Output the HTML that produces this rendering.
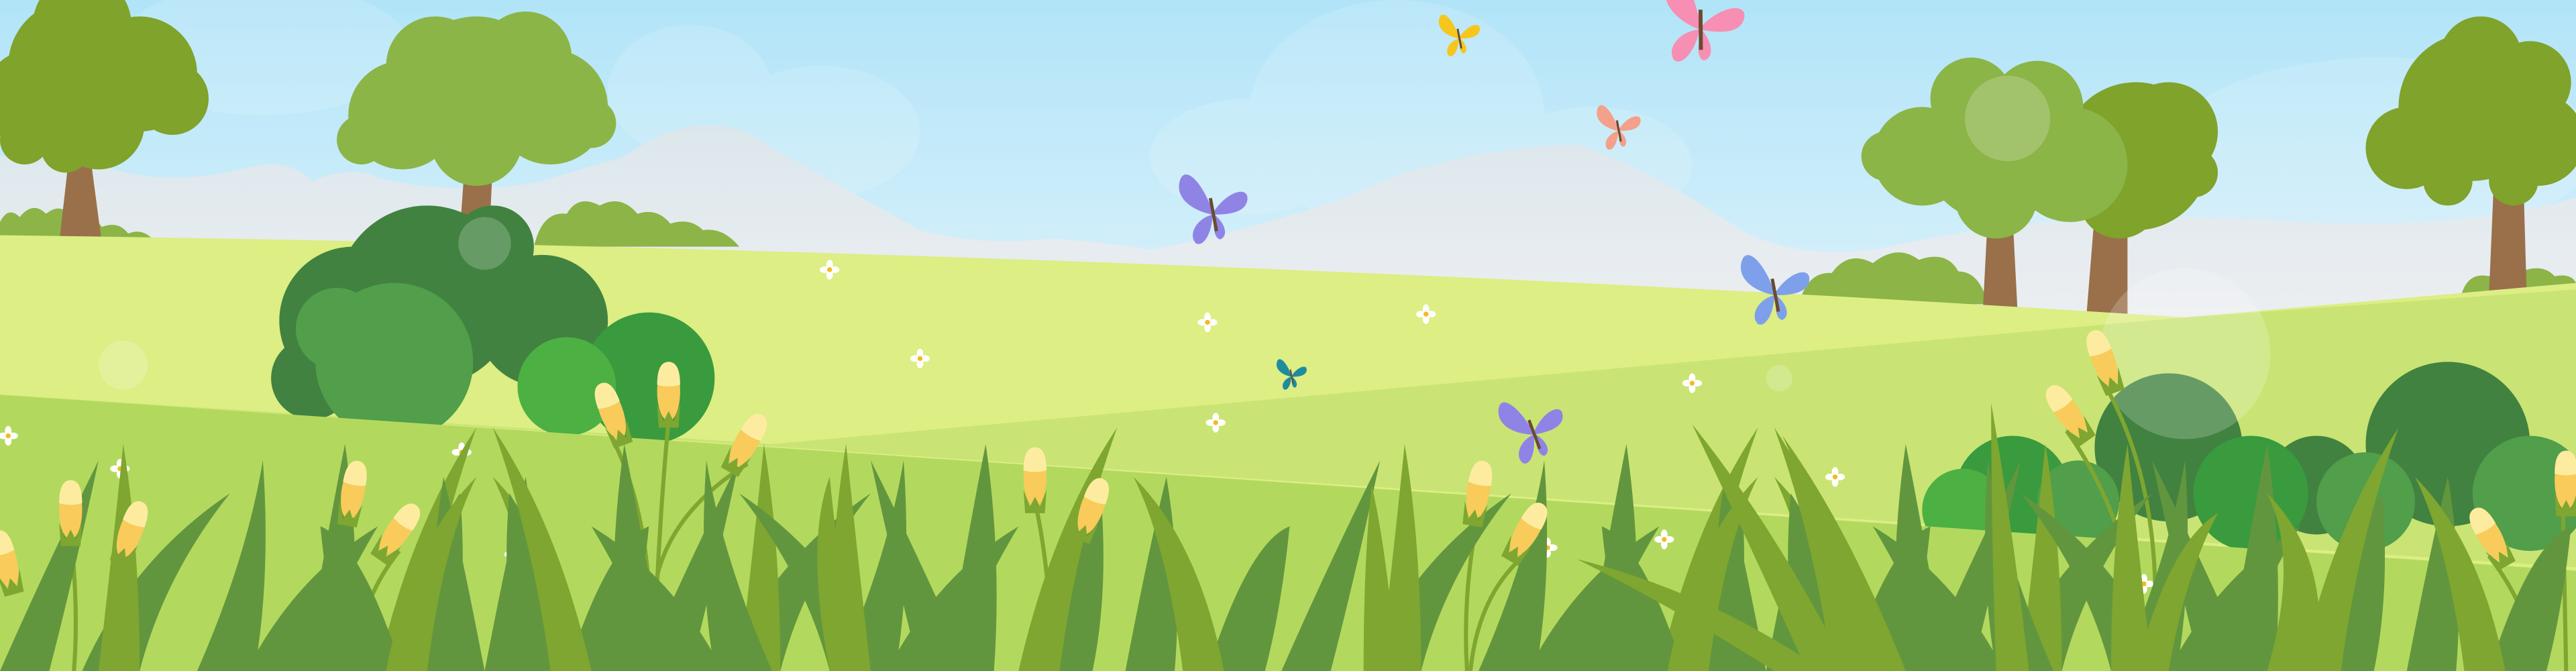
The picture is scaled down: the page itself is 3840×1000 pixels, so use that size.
<!DOCTYPE html>
<html><head><meta charset="utf-8"><style>
html,body{margin:0;padding:0;width:3840px;height:1000px;overflow:hidden;background:#cfeefa}
svg{display:block}
</style></head><body>
<svg width="3840" height="1000" viewBox="0 0 1568 408" preserveAspectRatio="none" xmlns="http://www.w3.org/2000/svg">
<defs>
<linearGradient id="sky" x1="0" y1="0" x2="0" y2="1"><stop offset="0" stop-color="#b1e4f8"/><stop offset="0.75" stop-color="#f2f9fc"/><stop offset="1" stop-color="#ffffff"/></linearGradient>
<linearGradient id="mt" x1="0" y1="0" x2="0" y2="1"><stop offset="0" stop-color="#dce7ec"/><stop offset="1" stop-color="#eff0f2"/></linearGradient>
<g id="bf"><path d="M0 0 C-6 -16 -14 -22 -16 -14 C-18 -6 -10 0 0 2Z M0 2 C-8 4 -12 12 -8 16 C-4 18 0 10 0 2Z M1 0 C8 -10 18 -12 17 -5 C16 1 8 2 1 2Z M1 2 C6 6 8 12 4 14 C1 14 0 8 1 2Z"/><path d="M-1 -6 L2 10" stroke="#6b4a30" stroke-width="1.6"/></g>
<g id="gr">
<path fill="#62963e" d="M0 408 Q30 340 60 280 Q45 350 30 408Z M50 408 Q80 340 140 300 Q100 350 85 408Z M120 408 Q150 340 160 280 Q165 350 155 408Z M185 408 Q200 320 210 270 Q220 340 215 408Z M240 408 Q260 330 280 300 Q285 360 275 408Z M295 408 Q310 330 320 290 Q330 350 325 408Z M345 408 Q370 330 395 320 Q390 370 380 408Z M150 408 Q180 350 230 320 Q200 370 190 408Z"/>
<path fill="#7ea630" d="M60 408 Q70 320 75 270 Q85 330 85 408Z M230 408 Q250 320 290 260 Q265 330 255 408Z M330 408 Q320 330 300 290 Q340 330 355 408Z"/>
</g>
<g id="bud"><ellipse cx="0" cy="0" rx="7" ry="18" fill="#f8cb5a"/><path d="M-7 -4 Q0 -2 7 -4 Q7 -18 0 -18 Q-7 -18 -7 -4Z" fill="#fdeca0"/><path d="M-7 8 L-3 18 L0 12 L3 18 L7 8 L6 22 L-6 22Z" fill="#7ea630"/></g>
<g id="dz" fill="#fff"><ellipse cx="0" cy="-3" rx="2" ry="3"/><ellipse cx="0" cy="3" rx="2" ry="3"/><ellipse cx="-3" cy="0" rx="3" ry="2"/><ellipse cx="3" cy="0" rx="3" ry="2"/><circle r="1.5" fill="#f5b921"/></g>
</defs>
<rect width="1568" height="408" fill="url(#sky)"/>
<g fill="#fff" opacity="0.14">
<ellipse cx="850" cy="70" rx="90" ry="70"/><ellipse cx="760" cy="95" rx="60" ry="35"/><ellipse cx="970" cy="100" rx="60" ry="35"/><ellipse cx="1450" cy="90" rx="130" ry="55"/><ellipse cx="1300" cy="110" rx="80" ry="40"/><ellipse cx="420" cy="55" rx="50" ry="40"/><ellipse cx="500" cy="80" rx="60" ry="40"/><ellipse cx="160" cy="30" rx="90" ry="40"/>
</g>
<path fill="url(#mt)" d="M0 95 L60 100 Q100 115 150 102 Q175 95 190 110 Q215 100 230 108 Q280 120 330 110 L380 95 Q430 60 470 90 L560 140 Q600 150 640 145 Q680 148 700 152 Q760 140 820 120 Q880 90 960 88 Q1000 100 1060 140 Q1100 160 1150 150 Q1260 125 1400 135 Q1500 140 1568 120 L1568 220 L0 220Z"/>
<g fill="#8cb447">
<path d="M0 148 L0 135 Q5 125 12 132 Q20 122 28 130 Q38 122 45 134 Q55 128 62 138 Q72 134 78 142 Q88 138 95 148Z"/>
<path d="M325 150 Q330 128 345 130 Q352 118 365 125 Q378 118 388 130 Q400 126 408 136 Q420 132 428 140 Q440 138 450 150Z"/>
<path d="M1095 185 Q1100 165 1115 166 Q1125 152 1140 160 Q1155 148 1168 158 Q1185 152 1192 165 Q1205 165 1210 185Z"/>
<path d="M1498 180 Q1502 165 1515 168 Q1525 158 1535 165 Q1548 160 1555 168 Q1565 166 1568 172 L1568 180Z"/>
</g>
<!-- trees -->
<path fill="#99704a" d="M36 148 L42 95 L55 95 L62 148Z M280 140 L283 98 L300 98 L298 140Z M1270 192 L1275 130 L1295 130 L1295 192Z M1207 188 L1210 130 L1225 130 L1228 188Z M1515 180 L1518 110 L1536 110 L1538 180Z"/>
<g fill="#7fa32b"><circle cx="45" cy="40" r="40"/><circle cx="85" cy="45" r="35"/><circle cx="20" cy="60" r="30"/><circle cx="60" cy="75" r="28"/><circle cx="105" cy="60" r="22"/><circle cx="50" cy="15" r="30"/><circle cx="15" cy="85" r="15"/><circle cx="40" cy="90" r="15"/>
<circle cx="1300" cy="95" r="45"/><circle cx="1320" cy="80" r="30"/><circle cx="1290" cy="120" r="25"/><circle cx="1335" cy="105" r="15"/>
<circle cx="1505" cy="65" r="45"/><circle cx="1465" cy="90" r="25"/><circle cx="1545" cy="85" r="28"/><circle cx="1510" cy="35" r="25"/><circle cx="1540" cy="50" r="25"/><circle cx="1490" cy="110" r="15"/><circle cx="1530" cy="110" r="15"/></g>
<g fill="#8bb547"><circle cx="290" cy="55" r="45"/><circle cx="245" cy="70" r="33"/><circle cx="335" cy="65" r="35"/><circle cx="265" cy="40" r="30"/><circle cx="320" cy="35" r="28"/><circle cx="290" cy="85" r="28"/><circle cx="360" cy="75" r="15"/><circle cx="220" cy="85" r="15"/>
<circle cx="1215" cy="90" r="45"/><circle cx="1170" cy="95" r="30"/><circle cx="1260" cy="100" r="35"/><circle cx="1200" cy="60" r="25"/><circle cx="1240" cy="65" r="28"/><circle cx="1215" cy="120" r="25"/><circle cx="1148" cy="95" r="15"/></g>
<!-- meadows -->
<path fill="#dcee84" d="M0 143 Q700 152 1330 193 L1568 172 L1568 408 L0 408Z"/>
<path fill="#c9e474" d="M0 240 L470 270 L1330 193 L1568 176 L1568 345Z"/>
<!-- bushes -->
<g fill="#418240"><circle cx="260" cy="180" r="55"/><circle cx="215" cy="195" r="45"/><circle cx="330" cy="195" r="40"/><circle cx="300" cy="150" r="25"/><circle cx="190" cy="230" r="25"/>
<circle cx="1320" cy="272" r="45"/><circle cx="1490" cy="270" r="50"/><circle cx="1410" cy="295" r="30"/></g>
<g fill="#3a9a3e"><circle cx="395" cy="230" r="40"/><circle cx="1225" cy="300" r="35"/><circle cx="1370" cy="300" r="35"/></g>
<g fill="#519e4b"><circle cx="240" cy="220" r="48"/><circle cx="205" cy="200" r="25"/><circle cx="1265" cy="305" r="25"/><circle cx="1440" cy="305" r="30"/><circle cx="1540" cy="300" r="35"/></g>
<g fill="#4cb043"><circle cx="345" cy="235" r="30"/><circle cx="1195" cy="310" r="25"/></g>
<g fill="#fff" opacity="0.2"><ellipse cx="295" cy="148" rx="16" ry="16"/><ellipse cx="75" cy="222" rx="15" ry="15"/><ellipse cx="1222" cy="72" rx="26" ry="26"/><circle cx="1330" cy="215" r="52"/><circle cx="1083" cy="230" r="8"/></g>
<!-- front meadow -->
<path fill="#b2d95e" d="M0 240 L1568 347 L1568 408 L0 408Z"/>
<!-- daisies -->
<g><use href="#dz" x="5" y="265"/><use href="#dz" x="73" y="285"/><use href="#dz" x="281" y="275"/><use href="#dz" x="560" y="218"/><use href="#dz" x="735" y="196"/><use href="#dz" x="505" y="164"/><use href="#dz" x="868" y="191"/><use href="#dz" x="740" y="257"/><use href="#dz" x="1030" y="233"/><use href="#dz" x="1117" y="290"/><use href="#dz" x="1013" y="328"/><use href="#dz" x="942" y="333"/><use href="#dz" x="527" y="375"/><use href="#dz" x="1305" y="355"/><use href="#dz" x="1548" y="372"/><use href="#dz" x="662" y="345"/><use href="#dz" x="313" y="337"/></g>
<!-- stems -->
<g stroke="#7ea630" stroke-width="2.5" fill="none">
<path d="M43 325 Q48 370 45 408"/><path d="M80 335 Q60 370 65 408"/><path d="M215 310 Q205 360 210 408"/><path d="M243 335 Q215 370 220 408"/><path d="M372 265 Q400 320 395 408"/><path d="M407 255 Q400 330 398 408"/><path d="M455 282 Q410 310 400 350"/><path d="M630 305 Q640 350 640 408"/><path d="M665 322 Q640 360 635 408"/><path d="M900 312 Q890 360 893 408"/><path d="M930 336 Q900 360 895 408"/><path d="M1280 232 Q1320 300 1310 408"/><path d="M1258 262 Q1300 320 1305 408"/><path d="M1515 338 Q1540 370 1545 408"/><path d="M1560 305 L1562 408"/>
</g>
<!-- grass -->
<use href="#gr" x="0"/><use href="#gr" x="390"/><use href="#gr" x="780"/><use href="#gr" x="1170"/>
<use href="#gr" transform="translate(590,0) scale(-1,1)"/><use href="#gr" transform="translate(1370,0) scale(-1,1)"/>
<g fill="#7ea630">
<path d="M1100 408 Q1060 320 1030 258 Q1080 320 1125 408Z"/><path d="M1140 408 Q1110 320 1085 265 Q1125 320 1160 408Z"/><path d="M1215 408 Q1212 320 1212 245 Q1225 320 1235 408Z"/><path d="M1300 408 Q1320 330 1350 312 Q1330 350 1320 408Z"/><path d="M960 340 Q1040 360 1110 408 L1080 408 Q1020 370 960 340Z"/><path d="M1380 408 Q1400 340 1380 300 Q1420 340 1410 408Z"/><path d="M830 408 Q830 340 835 295 Q845 340 850 408Z"/><path d="M505 408 Q490 330 505 290 Q510 340 520 408Z"/>
</g>
<!-- buds -->
<g>
<use href="#bud" transform="translate(43,310) rotate(0)"/><use href="#bud" transform="translate(80,322) rotate(20)"/><use href="#bud" transform="translate(215,298) rotate(10)"/><use href="#bud" transform="translate(243,322) rotate(35)"/><use href="#bud" transform="translate(372,250) rotate(-20)"/><use href="#bud" transform="translate(407,238)"/><use href="#bud" transform="translate(455,268) rotate(30)"/><use href="#bud" transform="translate(630,290)"/><use href="#bud" transform="translate(665,308) rotate(20)"/><use href="#bud" transform="translate(900,298) rotate(10)"/><use href="#bud" transform="translate(930,322) rotate(30)"/><use href="#bud" transform="translate(1280,218) rotate(-20)"/><use href="#bud" transform="translate(1258,250) rotate(-35)"/><use href="#bud" transform="translate(1515,325) rotate(-30)"/><use href="#bud" transform="translate(1562,292)"/><use href="#bud" transform="translate(3,340) rotate(-15)"/>
</g>
<!-- butterflies -->
<use href="#bf" fill="#f5c71e" transform="translate(888,22) scale(0.75)"/>
<use href="#bf" fill="#f68fb3" transform="translate(1035,15) scale(1.5) rotate(10)"/>
<use href="#bf" fill="#f4a08a" transform="translate(985,78) scale(0.8)"/>
<use href="#bf" fill="#8f84e6" transform="translate(738,128) scale(1.25)"/>
<use href="#bf" fill="#7ea0ea" transform="translate(1080,177) scale(1.25)"/>
<use href="#bf" fill="#1f8c9e" transform="translate(786,228) scale(0.55)"/>
<use href="#bf" fill="#8f84e6" transform="translate(933,262) scale(1.15) rotate(-10)"/>
</svg>
</body></html>
